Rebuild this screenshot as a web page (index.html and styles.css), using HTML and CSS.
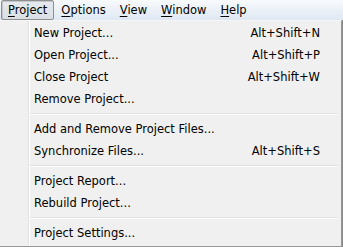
FILE: index.html
```html
<!DOCTYPE html>
<html lang="en">
<head>
    <meta charset="UTF-8">
    <title>Project Menu</title>
    <link rel="stylesheet" href="styles.css">
</head>
<body>
    <div class="menubar">
        <div class="menu-title open"><u>P</u>roject</div>
        <div class="menu-title"><u>O</u>ptions</div>
        <div class="menu-title"><u>V</u>iew</div>
        <div class="menu-title"><u>W</u>indow</div>
        <div class="menu-title"><u>H</u>elp</div>
    </div>
    <div class="stage">
        <div class="popup">
            <div class="item"><span>New Project...</span><span class="key">Alt+Shift+N</span></div>
            <div class="item"><span>Open Project...</span><span class="key">Alt+Shift+P</span></div>
            <div class="item"><span>Close Project</span><span class="key">Alt+Shift+W</span></div>
            <div class="item"><span>Remove Project...</span></div>
            <div class="sep"></div>
            <div class="item"><span>Add and Remove Project Files...</span></div>
            <div class="item"><span>Synchronize Files...</span><span class="key">Alt+Shift+S</span></div>
            <div class="sep"></div>
            <div class="item"><span>Project Report...</span></div>
            <div class="item"><span>Rebuild Project...</span></div>
            <div class="sep"></div>
            <div class="item"><span>Project Settings...</span></div>
        </div>
        <div class="behind"></div>
    </div>
</body>
</html>
```
FILE: styles.css
```css
body {
    margin: 0;
    width: 343px;
    height: 247px;
    overflow: hidden;
    background: #808080;
    font-family: "DejaVu Sans", sans-serif;
    font-size: 11.5px;
    color: #000;
}
.menubar {
    height: 20px;
    display: flex;
    align-items: center;
    padding-left: 1px;
    background: linear-gradient(to bottom, #f8fafd, #e9eff7 60%, #dfe8f3);
}
.menu-title {
    height: 18px;
    line-height: 18px;
    padding: 0 6px;
    border: 1px solid transparent;
    border-radius: 2px;
}
.menu-title u {
    text-decoration-thickness: 1px;
    text-underline-offset: 2px;
}
.menu-title.open {
    padding-right: 6px;
    border-color: #8e8f8f;
    background: linear-gradient(to bottom, #e6eaef, #d9dfe6);
    box-shadow: inset 1px 1px 0 #c4c8cd;
}
.stage {
    display: flex;
    height: 227px;
}
.popup {
    width: 341px;
    height: 224px;
    border-right: 1px solid #979797;
    border-bottom: 1px solid #979797;
    border-top: 1px solid #f5f5f5;
    padding-top: 1px;
    background: linear-gradient(to right, #f0f0f0 28px, #e2e3e3 28px 29px, #ffffff 29px 30px, #f0f0f0 30px);
}
.behind {
    flex: 1;
    background: #8a8a8a;
}
.item {
    height: 22px;
    line-height: 22px;
    display: flex;
    justify-content: space-between;
    padding-left: 34px;
    padding-right: 21px;
    white-space: nowrap;
}
.sep {
    height: 1px;
    margin: 3px 3px 3px 30px;
    border-top: 1px solid #e0e0e0;
    background: #ffffff;
}
```
